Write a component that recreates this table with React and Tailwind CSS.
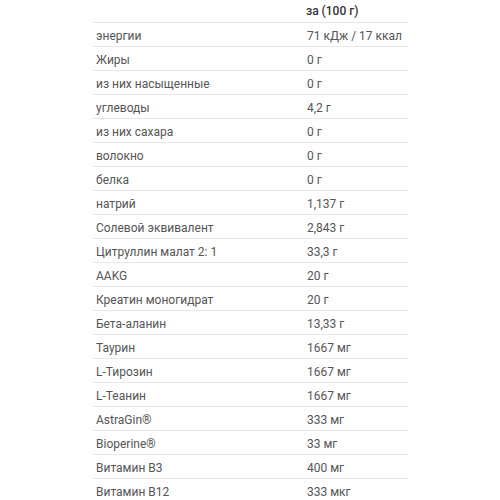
import React from "react";

const rows = [
  ["энергии", "71 кДж / 17 ккал"],
  ["Жиры", "0 г"],
  ["из них насыщенные", "0 г"],
  ["углеводы", "4,2 г"],
  ["из них сахара", "0 г"],
  ["волокно", "0 г"],
  ["белка", "0 г"],
  ["натрий", "1,137 г"],
  ["Солевой эквивалент", "2,843 г"],
  ["Цитруллин малат 2: 1", "33,3 г"],
  ["AAKG", "20 г"],
  ["Креатин моногидрат", "20 г"],
  ["Бета-аланин", "13,33 г"],
  ["Таурин", "1667 мг"],
  ["L-Тирозин", "1667 мг"],
  ["L-Теанин", "1667 мг"],
  ["AstraGin®", "333 мг"],
  ["Bioperine®", "33 мг"],
  ["Витамин B3", "400 мг"],
  ["Витамин B12", "333 мкг"],
];

function App() {
  return (
    <div className="bg-white w-[500px] h-[500px] overflow-hidden font-['Roboto',sans-serif] text-[12px]">
      <table className="ml-[92px] w-[316px] border-collapse">
        <thead>
          <tr className="h-[22px] border-b border-[#e8e8e8]">
            <th className="w-[211px]"></th>
            <th className="text-left font-medium text-[#333] pl-[3px]">за (100 г)</th>
          </tr>
        </thead>
        <tbody>
          {rows.map(([name, value]) => (
            <tr key={name} className="h-[24px] border-b border-[#e8e8e8] text-[#555]">
              <td className="pl-[4px] pt-[4px]">{name}</td>
              <td className="pl-[4px] pt-[4px]">{value}</td>
            </tr>
          ))}
        </tbody>
      </table>
    </div>
  );
}

export default App;
